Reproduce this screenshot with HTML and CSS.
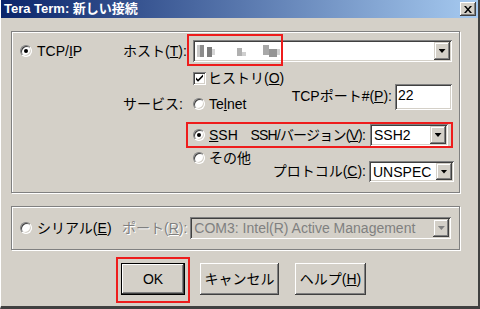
FILE: index.html
```html
<!DOCTYPE html>
<html lang="ja">
<head>
<meta charset="utf-8">
<title>Tera Term: 新しい接続</title>
<link rel="stylesheet" href="styles.css">
</head>
<body>
<div class="window">
  <div class="titlebar">
    <span class="title">Tera Term: 新しい接続</span>
    <span class="close"><svg width="8" height="7" viewBox="0 0 8 7"><path d="M0 0h2l2 2.5 2-2.5h2l-3 3.5 3 3.5h-2l-2-2.5-2 2.5h-2l3-3.5z" fill="#000"/></svg></span>
  </div>
  <div class="content">
    <div class="group g1">
      <div class="leftcol">
        <div class="opt opt-wide rowa"><span class="radio on"></span><span>TCP/<u>I</u>P</span></div>
      </div>
      <div class="form">
        <div class="row ra">
          <span class="lbl">ホスト(<u>T</u>):</span>
          <div class="hostwrap">
            <div class="combo host">
              <svg class="blur" width="90" height="14" viewBox="0 0 90 14">
                <rect x="0" y="1" width="3" height="12" fill="#c9c9c9"/>
                <rect x="3" y="1" width="4" height="12" fill="#8c8c8c"/>
                <rect x="10" y="3" width="5" height="10" fill="#7d7d7d"/>
                <rect x="15" y="5" width="3" height="6" fill="#d6d6d6"/>
                <rect x="40" y="4" width="5" height="8" fill="#b0b0b0"/>
                <rect x="45" y="8" width="4" height="4" fill="#cfcfcf"/>
                <rect x="66" y="1" width="6" height="10" fill="#a8a8a8"/>
                <rect x="72" y="5" width="8" height="8" fill="#959595"/>
                <rect x="80" y="5" width="3" height="6" fill="#d2d2d2"/>
              </svg>
              <span class="dd"></span>
            </div>
            <span class="mark host-mark"></span>
          </div>
        </div>
        <div class="row rb">
          <span class="check"><svg width="9" height="9" viewBox="0 0 9 9"><path d="M1 3.5l2 2 5-5v2.2l-5 5-2-2z" fill="#000"/></svg></span>
          <span>ヒストリ(<u>O</u>)</span>
        </div>
        <div class="row rc">
          <span class="lbl lbl-end">サービス:</span>
          <div class="cbody">
            <div class="opt opt-end"><span class="radio"></span><span>Te<u>l</u>net</span></div>
            <div class="portgrp">
              <span class="portlbl">TCPポート#(<u>P</u>):</span>
              <div class="edit">22</div>
            </div>
          </div>
        </div>
        <div class="row rd">
          <div class="sshbox">
            <div class="opt"><span class="radio on"></span><span><u>S</u>SH</span></div>
            <div class="vergrp">
              <span class="verlbl">SSH/バージョン(<u>V</u>):</span>
              <div class="combo ver"><span>SSH2</span><span class="dd"></span></div>
            </div>
          </div>
        </div>
        <div class="row re">
          <div class="opt opt-start"><span class="radio"></span><span>その他</span></div>
          <div class="protogrp">
            <span class="protolbl">プロトコル(<u>C</u>):</span>
            <div class="combo proto"><span>UNSPEC</span><span class="dd"></span></div>
          </div>
        </div>
      </div>
    </div>

    <div class="group g2">
      <div class="opt opt-wide serial"><span class="radio"></span><span>シリアル(<u>E</u>)</span></div>
      <span class="disabled portr">ポート(<u>R</u>):</span>
      <div class="combo com off"><span class="comtext">COM3: Intel(R) Active Management</span><span class="dd"></span></div>
    </div>

    <div class="btnrow">
      <div class="okmark"><div class="btn default ok">OK</div></div>
      <div class="btn cancel">キャンセル</div>
      <div class="btn help">ヘルプ(<u>H</u>)</div>
    </div>
  </div>
</div>
</body>
</html>
```

FILE: styles.css
```css
* { box-sizing: border-box; }
html, body { margin: 0; padding: 0; }
body {
  width: 480px;
  height: 309px;
  overflow: hidden;
  background: #d4d0c8;
  font-family: "Liberation Sans", "Noto Sans CJK JP", sans-serif;
  font-size: 14px;
  line-height: 16px;
  color: #000;
}
u { text-decoration: underline; text-underline-offset: 1px; }

.window {
  width: 480px;
  height: 309px;
  background: #d4d0c8;
  border-left: 1px solid #fff;
  border-right: 2px solid #404040;
  border-bottom: 3px solid #404040;
  display: flex;
  flex-direction: column;
}

.titlebar {
  height: 18px;
  flex: none;
  background: linear-gradient(to right, #0a246a, #a6caf0);
  display: flex;
  align-items: center;
  justify-content: space-between;
  padding: 0 2px 0 3px;
}
.title {
  color: #fff;
  font-weight: bold;
  font-size: 13px;
  line-height: 18px;
  white-space: nowrap;
}
.close {
  width: 16px;
  height: 14px;
  background: #d4d0c8;
  box-shadow: inset -1px -1px #404040, inset 1px 1px #fff, inset -2px -2px #808080;
  display: flex;
  align-items: center;
  justify-content: center;
}

.content {
  padding: 13px 0 0 10px;
  display: flex;
  flex-direction: column;
}

.group {
  width: 449px;
  border: 1px solid #808080;
  box-shadow: inset 1px 1px #fff, 1px 1px #fff;
}
.g1 {
  height: 162px;
  display: flex;
  padding: 8px 0 0 8px;
}
.leftcol { width: 103px; flex: none; }
.rowa { height: 22px; }

.opt { display: flex; align-items: center; gap: 4px; white-space: nowrap; }
.opt-wide { gap: 5px; }

.radio {
  width: 12px;
  height: 12px;
  flex: none;
  border-radius: 50%;
  background: #fff;
  border: 1px solid;
  border-color: #808080 #fff #fff #808080;
  box-shadow: inset 1px 1px #404040, inset -1px -1px #d4d0c8;
  display: flex;
  align-items: center;
  justify-content: center;
}
.radio.on::after {
  content: "";
  width: 4px;
  height: 4px;
  border-radius: 50%;
  background: #000;
}

.check {
  width: 13px;
  height: 13px;
  flex: none;
  background: #fff;
  box-shadow: inset 1px 1px #808080, inset -1px -1px #fff, inset 2px 2px #404040, inset -2px -2px #d4d0c8;
  display: flex;
  align-items: center;
  justify-content: center;
}

.form { width: 330px; display: flex; flex-direction: column; }
.row { display: flex; white-space: nowrap; }
.lbl { width: 70px; flex: none; }

.ra { height: 22px; align-items: center; }
.hostwrap { position: relative; width: 259px; height: 22px; }
.mark { border: 2px solid #ee1c1c; }
.host-mark {
  position: absolute;
  left: -6px;
  top: -6px;
  width: 96px;
  height: 32px;
}

.combo {
  position: relative;
  background: #fff;
  box-shadow: inset 1px 1px #808080, inset -1px -1px #fff, inset 2px 2px #404040, inset -2px -2px #d4d0c8;
  display: flex;
  align-items: center;
  padding-left: 4px;
  overflow: hidden;
  white-space: nowrap;
}
.host { width: 259px; height: 22px; }
.blur { display: block; }
.dd {
  position: absolute;
  right: 2px;
  top: 2px;
  bottom: 2px;
  width: 16px;
  background: #d4d0c8;
  box-shadow: inset -1px -1px #404040, inset 1px 1px #d4d0c8, inset -2px -2px #808080, inset 2px 2px #fff;
  display: flex;
  align-items: center;
  justify-content: center;
}
.dd::after {
  content: "";
  width: 7px;
  height: 4px;
  background: #000;
  clip-path: polygon(0 0, 100% 0, 50% 100%);
}

.rb { margin-top: 8px; height: 16px; align-items: center; padding-left: 70px; gap: 2px; }

.rc { height: 26px; }
.lbl-end { align-self: flex-end; }
.cbody { width: 259px; display: flex; justify-content: space-between; }
.opt-end { align-self: flex-end; height: 16px; }
.portgrp { display: flex; gap: 3px; margin-top: -2px; }
.portlbl { margin-top: 4px; }
.edit {
  width: 57px;
  height: 26px;
  background: #fff;
  box-shadow: inset 1px 1px #808080, inset -1px -1px #fff, inset 2px 2px #404040, inset -2px -2px #d4d0c8;
  padding: 3px 3px 0;
}

.rd { margin-top: 10px; padding-left: 63px; }
.sshbox {
  width: 271px;
  height: 26px;
  border: 2px solid #ee1c1c;
  display: flex;
  align-items: center;
  justify-content: space-between;
  padding: 0 3px 0 5px;
}
.vergrp { display: flex; align-items: center; gap: 5px; }
.verlbl { letter-spacing: -0.8px; }
.ver { width: 78px; height: 22px; }

.re { margin-top: 2px; height: 32px; padding-left: 70px; justify-content: space-between; }
.opt-start { align-self: flex-start; height: 16px; }
.protogrp { display: flex; align-items: flex-end; gap: 3px; margin-right: -1px; }
.protolbl { margin-bottom: 3px; }
.proto { width: 85px; height: 21px; }

.g2 {
  margin-top: 13px;
  height: 44px;
  display: flex;
  align-items: center;
  padding-left: 8px;
}
.serial { width: 102px; flex: none; }
.disabled { color: #808080; text-shadow: 1px 1px #fff; }
.portr { white-space: nowrap; }
.com {
  margin-left: 3px;
  width: 261px;
  height: 22px;
  background: #d4d0c8;
}
.comtext { color: #808080; }
.off .dd::after { background: #808080; }

.btnrow {
  margin-top: 7px;
  display: flex;
  align-items: flex-start;
  padding-left: 105px;
}
.okmark {
  border: 2px solid #ee1c1c;
  padding: 4px 3px 6px 3px;
}
.btn {
  height: 32px;
  background: #d4d0c8;
  box-shadow: inset -1px -1px #404040, inset 1px 1px #fff, inset -2px -2px #808080;
  display: flex;
  align-items: center;
  justify-content: center;
  white-space: nowrap;
}
.btn.default {
  box-shadow: inset 0 0 0 1px #000, inset -2px -2px #404040, inset 2px 2px #fff, inset -3px -3px #808080;
}
.ok { width: 64px; }
.cancel { width: 79px; margin-left: 10px; margin-top: 6px; }
.help { width: 71px; margin-left: 16px; margin-top: 6px; }
```
